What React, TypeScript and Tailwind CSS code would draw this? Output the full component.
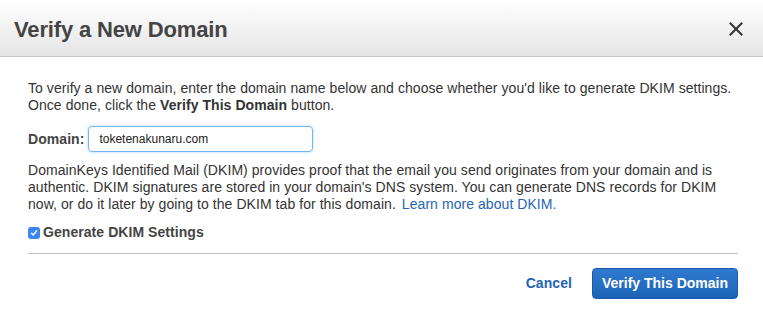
import React, { useState } from "react";

const VerifyDomainDialog: React.FC = () => {
  const [domain, setDomain] = useState("toketenakunaru.com");
  const [dkim, setDkim] = useState(true);

  return (
    <div className="w-[763px] h-[313px] bg-white font-['Liberation_Sans',Arial,sans-serif] text-[#333]">
      <div className="flex h-[57px] items-center justify-between border-b border-[#c8c8c8] bg-gradient-to-b from-white to-[#e5e5e5] pl-[14px] pr-[20px]">
        <h1 className="pt-[3px] text-[22px] font-bold tracking-[-0.15px] text-[#444]">Verify a New Domain</h1>
        <button className="pt-[2px] text-[#333]" aria-label="Close">
          <svg width="14" height="14" viewBox="0 0 14 14" fill="none">
            <path d="M1.5 1.5L12.5 12.5M12.5 1.5L1.5 12.5" stroke="currentColor" strokeWidth="2" strokeLinecap="square" />
          </svg>
        </button>
      </div>

      <div className="pl-[28px] pr-[25px] pt-[23px] text-[14px] leading-[17px] tracking-[0.06px]">
        <p>
          To verify a new domain, enter the domain name below and choose whether you'd like to generate DKIM settings.
          <br />
          Once done, click the <span className="font-bold">Verify This Domain</span> button.
        </p>

        <div className="mt-[12px] flex items-center gap-[4px]">
          <label className="font-bold text-[#444]">Domain:</label>
          <input
            value={domain}
            onChange={(e) => setDomain(e.target.value)}
            className="h-[26px] w-[225px] rounded-[4px] border border-[#74b4f7] px-[10px] text-[12px] tracking-normal text-[#222] shadow-[0_0_3px_#a9d1fb] outline-none"
          />
        </div>

        <p className="mt-[10px]">
          DomainKeys Identified Mail (DKIM) provides proof that the email you send originates from your domain and is
          authentic. DKIM signatures are stored in your domain's DNS system. You can generate DNS records for DKIM
          now, or do it later by going to the DKIM tab for this domain.
          <a href="#" className="ml-[6px] text-[#1f64b4]">Learn more about DKIM.</a>
        </p>

        <label className="mt-[11px] flex items-center gap-[3px] font-bold text-[#444]">
          <span
            onClick={() => setDkim(!dkim)}
            className={`flex h-[12px] w-[12px] items-center justify-center rounded-[3px] ${
              dkim ? "bg-[#3a86f4]" : "border border-[#aaa] bg-white"
            }`}
          >
            {dkim && (
              <svg width="8" height="8" viewBox="0 0 8 8" fill="none">
                <path d="M1.5 4.3L3.2 6L6.6 1.8" stroke="white" strokeWidth="1.4" strokeLinecap="round" strokeLinejoin="round" />
              </svg>
            )}
          </span>
          Generate DKIM Settings
        </label>

        <div className="mt-[12px] border-t border-[#c4c4c4]" />

        <div className="flex items-center justify-end gap-[20px] pt-[14px]">
          <a href="#" className="font-bold text-[#1f64b4]">Cancel</a>
          <button className="h-[31px] rounded-[4px] border border-[#1a5aa6] bg-gradient-to-b from-[#2f7bd0] to-[#1c63b7] px-[9px] text-[14px] font-bold tracking-normal text-white">
            Verify This Domain
          </button>
        </div>
      </div>
    </div>
  );
};

export default function App() {
  return <VerifyDomainDialog />;
}
